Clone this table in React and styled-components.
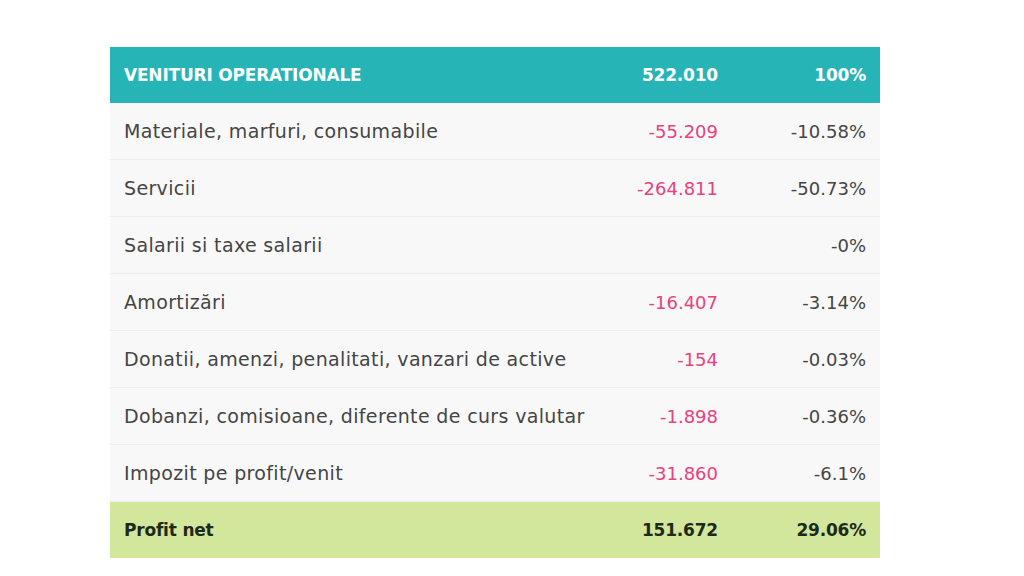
import styled, { createGlobalStyle } from 'styled-components';

const GlobalStyle = createGlobalStyle`
  html, body {
    margin: 0;
    padding: 0;
    background: #ffffff;
  }
  body {
    font-family: 'DejaVu Sans', 'Liberation Sans', sans-serif;
  }
`;

const rows = [
  { label: 'Materiale, marfuri, consumabile', amount: '-55.209', percent: '-10.58%' },
  { label: 'Servicii', amount: '-264.811', percent: '-50.73%' },
  { label: 'Salarii si taxe salarii', amount: '', percent: '-0%' },
  { label: 'Amortizări', amount: '-16.407', percent: '-3.14%' },
  { label: 'Donatii, amenzi, penalitati, vanzari de active', amount: '-154', percent: '-0.03%' },
  { label: 'Dobanzi, comisioane, diferente de curs valutar', amount: '-1.898', percent: '-0.36%' },
  { label: 'Impozit pe profit/venit', amount: '-31.860', percent: '-6.1%' },
];

const Page = styled.div`
  width: 1024px;
  height: 576px;
  padding-top: 47px;
  padding-left: 110px;
  box-sizing: border-box;
`;

const Table = styled.div`
  width: 770px;
  display: flex;
  flex-direction: column;
`;

const Row = styled.div`
  display: grid;
  grid-template-columns: minmax(0, 1fr) 150px 148px;
  align-items: center;
  height: ${({ $h }) => $h || '57px'};
  padding: 0 14px;
  box-sizing: border-box;
  background: ${({ $bg }) => $bg || '#f8f8f8'};
  border-bottom: ${({ $line }) => ($line ? '1px solid #ececec' : 'none')};
  color: ${({ $color }) => $color || '#454545'};
  font-size: ${({ $bold }) => ($bold ? '17px' : '18px')};
  font-weight: ${({ $bold }) => ($bold ? 700 : 400)};
  letter-spacing: ${({ $bold }) => ($bold ? '-0.2px' : '0')};
`;

const Label = styled.span`
  white-space: nowrap;
  font-size: ${({ $bold }) => ($bold ? '17px' : '19px')};
  letter-spacing: ${({ $bold }) => ($bold ? '-0.2px' : '0.35px')};
`;

const Num = styled.span`
  text-align: right;
  white-space: nowrap;
  color: ${({ $color }) => $color || 'inherit'};
`;

export default function App() {
  return (
    <>
      <GlobalStyle />
      <Page>
        <Table>
          <Row $bg="#27b4b6" $color="#ffffff" $bold $h="56px">
            <Label $bold>VENITURI OPERATIONALE</Label>
            <Num>522.010</Num>
            <Num>100%</Num>
          </Row>
          {rows.map((r) => (
            <Row key={r.label} $line>
              <Label>{r.label}</Label>
              <Num $color="#e8417f">{r.amount}</Num>
              <Num>{r.percent}</Num>
            </Row>
          ))}
          <Row $bg="#d3e79c" $color="#1d2a1a" $bold $h="56px">
            <Label $bold>Profit net</Label>
            <Num>151.672</Num>
            <Num>29.06%</Num>
          </Row>
        </Table>
      </Page>
    </>
  );
}
